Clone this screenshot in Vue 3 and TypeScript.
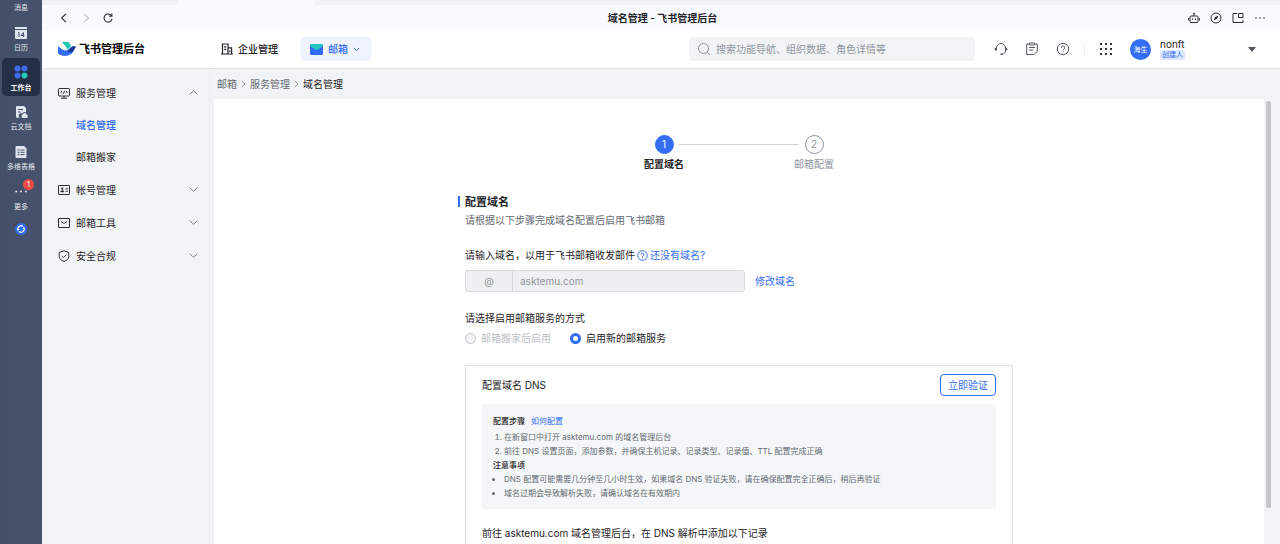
<script setup lang="ts">
import { ref } from 'vue'

interface NavGroup { label: string; icon: string; open: boolean; children: string[] }

const groups = ref<NavGroup[]>([
  { label: '服务管理', icon: 'service', open: true, children: ['域名管理', '邮箱搬家'] },
  { label: '帐号管理', icon: 'account', open: false, children: [] },
  { label: '邮箱工具', icon: 'mail', open: false, children: [] },
  { label: '安全合规', icon: 'shield', open: false, children: [] },
])
const current = ref('域名管理')
const mode = ref('new')
const keyword = ref('')
const domain = ref('asktemu.com')
</script>

<template>
  <div class="app">
    <nav class="rail" aria-label="应用">
      <button class="rail-item first">消息</button>
      <button class="rail-item second">
        <svg width="12" height="12" viewBox="0 0 12 12"><path d="M0 0h12v2H0zM0 3h12v8a1 1 0 0 1-1 1H1a1 1 0 0 1-1-1z" fill="#dfe4ee" /><path d="M3 6l1-.5V10M8.500 10V5.500L6 8.500h3.500" fill="none" stroke="#465270" /></svg>
        日历
      </button>
      <button class="rail-item active">
        <svg width="14" height="14" viewBox="0 0 14 14"><rect x=".5" y=".5" width="6" height="6" rx="2.500" fill="#3e6cf0" /><circle cx="10.500" cy="3.500" r="3" fill="#3e6cf0" /><circle cx="3.500" cy="10.500" r="3" fill="#3e6cf0" /><circle cx="10.500" cy="10.500" r="3" fill="#22c9b4" /></svg>
        工作台
      </button>
      <button class="rail-item">
        <svg width="13" height="12" viewBox="0 0 13 12"><path d="M2 0h7l2 2v4.500a3 3 0 0 0-4 1A2.300 2.300 0 0 0 5 11.800H2a1 1 0 0 1-1-1V1a1 1 0 0 1 1-1z" fill="#dfe4ee" /><path d="M3 3.500h5M3 6h2.500" stroke="#465270" /><path d="M7.500 12a2 2 0 0 1 0-3.500 2.200 2.200 0 0 1 4-.2A2 2 0 0 1 11.500 12z" fill="#dfe4ee" /></svg>
        云文档
      </button>
      <button class="rail-item">
        <svg width="12" height="12" viewBox="0 0 12 12"><path d="M1 0h8l2.500 2.500V11a1 1 0 0 1-1 1H1.500a1 1 0 0 1-1-1V1z" fill="#dfe4ee" /><path d="M2.500 4h2M5.500 4h4M2.500 6.300h2M5.500 6.300h4M2.500 8.600h2M5.500 8.600h4" stroke="#465270" /></svg>
        多维表格
      </button>
      <button class="rail-item">
        <svg width="12" height="12" viewBox="0 0 12 12"><g fill="#dfe4ee"><circle cx="1.200" cy="5.500" r="1" /><circle cx="6" cy="5.500" r="1" /><circle cx="10.800" cy="5.500" r="1" /></g></svg>
        更多
        <span class="badge">1</span>
      </button>
      <button class="sync" aria-label="同步">
        <svg width="12" height="12" viewBox="0 0 12 12"><circle cx="6" cy="6" r="6" fill="#2f6df0" /><path d="M3.200 7.200A3 3 0 0 1 8 3.700M8.800 4.800A3 3 0 0 1 4 8.300" fill="none" stroke="#fff" stroke-width="1.200" /><path d="M2 6h2.600L3.200 7.900zM10 6H7.400l1.400-1.900z" fill="#fff" /></svg>
      </button>
    </nav>

    <div class="window">
      <div class="tabs"><div class="tab"></div></div>
      <div class="toolbar">
        <div class="history">
          <button aria-label="后退"><svg width="10" height="10" viewBox="0 0 10 10" fill="none" stroke="#2b2f36" stroke-width="1.100"><path d="M7 .8L2.500 5 7 9.200" /></svg></button>
          <button aria-label="前进"><svg width="10" height="10" viewBox="0 0 10 10" fill="none" stroke="#bbbfc4" stroke-width="1.100"><path d="M3 .8L7.500 5 3 9.200" /></svg></button>
          <button aria-label="刷新"><svg width="10" height="10" viewBox="0 0 10 10" fill="none" stroke="#2b2f36" stroke-width="1.100"><path d="M8.500 3A4 4 0 1 0 9 5.800M8.900.6v2.700H6.200" /></svg></button>
        </div>
        <div class="title">域名管理 - 飞书管理后台</div>
        <div class="tools">
          <button aria-label="机器人"><svg width="12" height="12" viewBox="0 0 12 12" fill="none" stroke="#2b2f36"><rect x="2" y="4" width="8" height="6.500" rx="1" /><path d="M6 4V1.500M.6 6v2.500M11.400 6v2.500M4.500 6.500V8M7.500 6.500V8" /><circle cx="6" cy="1.500" r=".5" /></svg></button>
          <button aria-label="浏览器"><svg width="12" height="12" viewBox="0 0 12 12" fill="none" stroke="#2b2f36"><circle cx="6" cy="6" r="5" /><path d="M8.300 3.700L7 7 3.700 8.300 5 5z" fill="#2b2f36" stroke="none" /></svg></button>
          <button aria-label="小窗"><svg width="12" height="12" viewBox="0 0 12 12" fill="none" stroke="#2b2f36"><path d="M5 1.500H1v9h10V8" /><path d="M6.500 1.500H11v4H6.500z" /></svg></button>
          <button aria-label="更多"><svg width="12" height="12" viewBox="0 0 12 12" fill="#2b2f36"><circle cx="2" cy="6" r=".8" /><circle cx="6" cy="6" r=".8" /><circle cx="10" cy="6" r=".8" /></svg></button>
        </div>
      </div>

      <header class="header">
        <a class="brand" href="#">
          <svg width="18" height="14" viewBox="0 0 18 14"><path d="M3.500 0h6.800c1.500 1.300 2.300 3 2.600 4.600L9.500 7.500C8 4.500 6 2 3.500 0z" fill="#24c6b0" /><path d="M0 4c3 3.200 6.500 5 9.500 4.300 1.800-.4 3-3.300 5-3.900 1.200-.3 2.500-.1 3.500.4-1.500 1.400-1.900 4-3.600 6C11 14.700 4.500 14.800.6 12A1.300 1.300 0 0 1 0 11z" fill="#336df4" /><path d="M9 8.400c2-.4 3.500-3.400 5.500-4 1.200-.3 2.500-.1 3.500.4-1.500 1.400-1.900 4-3.600 5.200-1.500.9-3.600.3-5.400-1.600z" fill="#133c9a" /></svg>
          飞书管理后台
        </a>
        <a class="menu company" href="#">
          <svg width="12" height="12" viewBox="0 0 12 12" fill="none" stroke="#1f2329" stroke-width="1.200"><path d="M1.500 11V1H7v10M7 4.800h3.600V11M0 11h12M3.200 3.800h2M3.200 6.300h2M8.800 7.500v1.500" /></svg>
          企业管理
        </a>
        <button class="menu current">
          <svg width="13" height="11" viewBox="0 0 13 11"><rect width="13" height="11" rx="1.500" fill="#2f6bf2" /><path d="M1.500 0h10A1.500 1.500 0 0 1 13 1.500V2L8 5.500a2.500 2.500 0 0 1-3 0L0 2v-.5A1.500 1.500 0 0 1 1.500 0z" fill="#26c5c0" /></svg>
          邮箱
          <svg width="7" height="7" viewBox="0 0 7 7" fill="none" stroke="#336df4"><path d="M.8 2l2.700 2.700L6.200 2" /></svg>
        </button>
        <label class="search">
          <svg width="14" height="14" viewBox="0 0 14 14" fill="none" stroke="#8f959e"><circle cx="6.500" cy="6.500" r="5" /><path d="M10.200 10.200l2.600 2.600" /></svg>
          <input v-model="keyword" type="search" aria-label="搜索" placeholder="搜索功能导航、组织数据、角色详情等" />
        </label>
        <div class="actions">
          <button aria-label="客服"><svg width="14" height="14" viewBox="0 0 14 14" fill="none" stroke="#51565d"><path d="M2.500 8.500V6a4.500 4.500 0 0 1 9 0v2.500c0 2-1.500 3.500-3.500 3.500" /><path d="M1.500 6v2.500M12.500 6v2.500M6.500 12.300h2" stroke-width="1.500" /></svg></button>
          <button aria-label="任务"><svg width="14" height="14" viewBox="0 0 14 14" fill="none" stroke="#51565d"><path d="M4.500 2H1.700v10.500h7l3.600-3V2H9.500" /><path d="M4.500 1h5v2h-5zM4 5.500h6M4 8h4" /></svg></button>
          <button aria-label="帮助"><svg width="14" height="14" viewBox="0 0 14 14" fill="none" stroke="#51565d"><circle cx="7" cy="7" r="5.700" /><path d="M5.300 5.800a1.700 1.700 0 1 1 2.400 1.500c-.5.300-.7.500-.7 1.100M7 9.400v1" /></svg></button>
        </div>
        <button class="apps" aria-label="应用列表"><svg width="12" height="12" viewBox="0 0 12 12" fill="#2b2f36"><path d="M0 0h2v2H0zM5 0h2v2H5zM10 0h2v2h-2zM0 5h2v2H0zM5 5h2v2H5zM10 5h2v2h-2zM0 10h2v2H0zM5 10h2v2H5zM10 10h2v2h-2z" /></svg></button>
        <div class="avatar">海生</div>
        <div class="user"><span class="name">nonft</span><span class="role">创建人</span></div>
        <button class="caret" aria-label="帐号菜单"><svg width="8" height="5" viewBox="0 0 8 5"><path d="M0 0h8L4 5z" fill="#51565d" /></svg></button>
      </header>

      <div class="body">
        <aside class="side">
          <template v-for="g in groups" :key="g.label">
            <button class="group" :aria-expanded="g.open" @click="g.open = !g.open">
              <svg v-if="g.icon === 'service'" width="12" height="12" viewBox="0 0 12 12" fill="none" stroke="#2b2f36"><rect x=".5" y="1.500" width="11" height="7.500" rx=".8" /><path d="M6 9v2M3 11.200h6M4 4L2.800 5.200 4 6.400M8 4l1.200 1.200L8 6.400M6.500 3.800l-1 3" /></svg>
              <svg v-else-if="g.icon === 'account'" width="12" height="12" viewBox="0 0 12 12" fill="none" stroke="#2b2f36"><rect x=".5" y="1.500" width="11" height="9" rx=".5" /><path d="M7.500 4.800H10M7.500 7.200H10" /><circle cx="4.300" cy="4.700" r="1.100" fill="#2b2f36" stroke="none" /><path d="M2.300 8.200a2 2 0 0 1 4 0z" fill="#2b2f36" stroke="none" /></svg>
              <svg v-else-if="g.icon === 'mail'" width="12" height="12" viewBox="0 0 12 12" fill="none" stroke="#2b2f36"><rect x=".5" y="1.500" width="11" height="9" rx=".5" /><path d="M3 4.500l3 2 3-2" /></svg>
              <svg v-else width="12" height="12" viewBox="0 0 12 12" fill="none" stroke="#2b2f36"><path d="M6 .8l4.800 1.700v4C10.800 8.700 9 10.400 6 11.400 3 10.400 1.200 8.700 1.200 6.500v-4z" /><path d="M3.800 6l1.700 1.600 2.900-3" /></svg>
              <span>{{ g.label }}</span>
              <svg class="chevron" :class="{ up: g.open }" width="9" height="9" viewBox="0 0 9 9" fill="none" stroke="#7b8088"><path d="M.7 2.700l3.800 3.600 3.800-3.600" /></svg>
            </button>
            <template v-if="g.open">
              <a v-for="c in g.children" :key="c" href="#" class="child" :class="{ on: c === current }" @click.prevent="current = c">{{ c }}</a>
            </template>
          </template>
        </aside>

        <main class="main">
          <nav class="crumbs" aria-label="面包屑">
            <a href="#">邮箱</a>
            <svg width="5" height="8" viewBox="0 0 5 8" fill="none" stroke="#8f959e"><path d="M.8 1L4 4 .8 7" /></svg>
            <a href="#">服务管理</a>
            <svg width="5" height="8" viewBox="0 0 5 8" fill="none" stroke="#8f959e"><path d="M.8 1L4 4 .8 7" /></svg>
            <span>域名管理</span>
          </nav>
          <div class="viewport">
            <div class="panel">
              <ol class="steps">
                <li class="step now"><span class="num">1</span>配置域名</li>
                <li class="line" aria-hidden="true"></li>
                <li class="step"><span class="num">2</span>邮箱配置</li>
              </ol>
              <form class="form" @submit.prevent>
                <h1>配置域名</h1>
                <p class="intro">请根据以下步骤完成域名配置后启用飞书邮箱</p>

                <div class="label-row">
                  <label for="domain">请输入域名，以用于飞书邮箱收发邮件</label>
                  <a href="#">
                    <svg width="11" height="11" viewBox="0 0 11 11" fill="none" stroke="#336df4"><circle cx="5.500" cy="5.500" r="4.800" /><path d="M4.100 4.500a1.400 1.400 0 1 1 2 1.300c-.4.200-.6.400-.6.900M5.500 7.500v1" /></svg>
                    还没有域名?
                  </a>
                </div>
                <div class="domain-row">
                  <div class="domain">
                    <span class="at">@</span>
                    <input id="domain" v-model="domain" type="text" disabled />
                  </div>
                  <a href="#">修改域名</a>
                </div>

                <fieldset>
                  <legend>请选择启用邮箱服务的方式</legend>
                  <label class="radio off"><input v-model="mode" type="radio" name="mode" value="move" disabled />邮箱搬家后启用</label>
                  <label class="radio"><input v-model="mode" type="radio" name="mode" value="new" />启用新的邮箱服务</label>
                </fieldset>

                <section class="card">
                  <div class="card-head">
                    <h2>配置域名 DNS</h2>
                    <button type="button" class="verify">立即验证</button>
                  </div>
                  <div class="tips">
                    <h3>配置步骤<a href="#">如何配置</a></h3>
                    <ol>
                      <li>在新窗口中打开 asktemu.com 的域名管理后台</li>
                      <li>前往 DNS 设置页面，添加参数，并确保主机记录、记录类型、记录值、TTL 配置完成正确</li>
                    </ol>
                    <h3>注意事项</h3>
                    <ul>
                      <li>DNS 配置可能需要几分钟至几小时生效，如果域名 DNS 验证失败，请在确保配置完全正确后，稍后再验证</li>
                      <li>域名过期会导致解析失败，请确认域名在有效期内</li>
                    </ul>
                  </div>
                  <p class="next">前往 asktemu.com 域名管理后台，在 DNS 解析中添加以下记录</p>
                </section>
              </form>
            </div>
            <div class="scrollbar"><div class="thumb"></div></div>
          </div>
        </main>
      </div>
    </div>
  </div>
</template>

<style>
body { margin: 0; }
</style>

<style scoped>
* { box-sizing: border-box; }
.app { display: flex; height: 100vh; overflow: hidden; background: #f2f3f5; color: #1f2329; font: 10px/16px Inter, "Noto Sans CJK SC", sans-serif; }
button { border: 0; padding: 0; margin: 0; background: none; font: inherit; color: inherit; display: flex; align-items: center; cursor: pointer; }
a { color: #336df4; text-decoration: none; }
h1, h2, h3, p, ol, ul { margin: 0; padding: 0; font-size: inherit; font-weight: 400; }
svg { flex: none; display: block; }

.rail { flex: none; width: 42px; background: linear-gradient(90deg, #434f68, #49526d); display: flex; flex-direction: column; align-items: center; overflow: hidden; }
.rail-item { position: relative; flex: none; width: 38px; height: 38px; margin-bottom: 2px; padding-top: 4px; border-radius: 5px; flex-direction: column; justify-content: center; gap: 4px; font-size: 7px; line-height: 10px; color: #e4e8f0; white-space: nowrap; }
.rail-item.first { height: 16px; margin-bottom: 4px; padding-top: 0; }
.rail-item.second { height: 36px; }
.rail-item.active { background: #262f45; color: #fff; font-weight: 700; }
.badge { position: absolute; top: 1px; right: 6px; width: 11px; height: 11px; border-radius: 6px; background: #ec4b48; color: #fff; line-height: 11px; text-align: center; }
.sync { margin-top: 5px; }

.window { flex: 1; min-width: 0; display: flex; flex-direction: column; }
.tabs { flex: none; height: 5px; background: #f0f1f3; padding-left: 136px; }
.tab { width: 137px; height: 5px; background: #f8fafd; }
.toolbar { flex: none; height: 25px; background: #f8fafd; display: grid; grid-template-columns: 1fr auto 1fr; align-items: center; padding: 0 14px 0 17px; }
.history { display: flex; gap: 12px; }
.title { font-weight: 600; }
.tools { display: flex; justify-content: flex-end; gap: 10px; }

.header { flex: none; height: 39px; background: #fff; border-bottom: 1px solid #e2e4e8; display: flex; align-items: center; padding: 0 24px 0 16px; }
.brand { display: flex; align-items: center; gap: 3px; color: #000; font-size: 11px; font-weight: 700; width: 154px; }
.menu { display: flex; align-items: center; gap: 5px; height: 24px; color: #1f2329; padding: 0 9px; font-weight: 500; }
.company { width: 80px; margin-right: 9px; white-space: nowrap; }
.current { width: 70px; background: #eff3fe; border-radius: 3px; color: #336df4; }
.search { width: 286px; height: 24px; margin-left: auto; background: #f2f3f5; border-radius: 4px; display: flex; align-items: center; gap: 5px; padding: 0 8px; }
.search input { flex: 1; min-width: 0; border: 0; outline: 0; background: none; font: inherit; padding: 0; }
.search input::placeholder { color: #8f959e; opacity: 1; }
.actions { display: flex; gap: 17px; padding: 0 14px 0 19px; border-right: 1px solid #eceef0; }
.apps { margin: 0 18px 0 15px; }
.avatar { width: 21px; height: 21px; border-radius: 50%; background: #336df4; color: #fff; font-size: 7px; line-height: 21px; text-align: center; }
.user { display: flex; flex-direction: column; align-items: flex-start; width: 97px; padding-left: 9px; }
.name { line-height: 12px; }
.role { background: #dbe6ff; color: #336df4; border-radius: 2px; padding: 0 2px; font-size: 7px; line-height: 10px; }

.body { flex: 1; min-height: 0; display: flex; }
.side { flex: none; width: 168px; padding: 7px 11px 0 16px; border-right: 1px solid #eceef0; }
.group { width: 100%; height: 33px; gap: 6px; }
.chevron { margin-left: auto; }
.up { transform: rotate(180deg); }
.child { display: block; padding-left: 18px; line-height: 32px; color: #1f2329; }
.child.on { color: #336df4; font-weight: 500; }

.main { flex: 1; min-width: 0; display: flex; flex-direction: column; padding-left: 4px; }
.crumbs { flex: none; display: flex; align-items: center; gap: 4px; height: 30px; padding-left: 3px; }
.crumbs a { color: #646a73; }
.viewport { flex: 1; min-height: 0; display: flex; }
.panel { flex: 1; min-width: 0; background: #fff; overflow: hidden; padding-top: 36px; }
.scrollbar { flex: none; width: 16px; padding: 2px 9px 36px 2px; }
.thumb { height: 100%; border-radius: 3px; background: #c3c5c8; }

.steps { display: flex; justify-content: center; list-style: none; }
.step { width: 40px; display: flex; flex-direction: column; align-items: center; gap: 2px; color: #8f959e; white-space: nowrap; }
.num { width: 19px; height: 19px; border: 1px solid #8f959e; border-radius: 50%; line-height: 17px; text-align: center; }
.now { color: #1f2329; font-weight: 600; }
.now .num { background: #336df4; border-color: #336df4; color: #fff; font-weight: 400; }
.line { width: 120px; height: 1px; margin: 9px -5px 0; background: #cfd2d6; }

.form { max-width: 548px; margin: 22px auto 0; }
h1 { font-size: 11px; line-height: 16px; font-weight: 600; position: relative; }
h1::before { content: ""; position: absolute; left: -7px; top: 2px; width: 2px; height: 11px; background: #336df4; }
.intro { margin-top: 2px; color: #646a73; }
.label-row { display: flex; gap: 2px; margin-top: 19px; }
.label-row a { display: flex; align-items: center; gap: 2px; }
.domain-row { display: flex; align-items: center; gap: 10px; margin-top: 7px; }
.domain { width: 280px; height: 22px; border: 1px solid #d5d8dc; border-radius: 3px; background: #eff0f1; display: flex; overflow: hidden; color: #8f959e; }
.at { width: 47px; border-right: 1px solid #d5d8dc; text-align: center; line-height: 20px; }
.domain input { flex: 1; min-width: 0; border: 0; padding: 0 7px; background: none; font: inherit; color: #8f959e; }
fieldset { border: 0; margin: 18px 0 0; padding: 0; display: flex; gap: 19px; }
legend { padding: 0; margin-bottom: 4px; }
.radio { display: flex; align-items: center; gap: 5px; }
.radio input { appearance: none; width: 11px; height: 11px; margin: 0; border: 1px solid #c4c8cd; border-radius: 50%; background: #f2f3f5; }
.radio input:checked { border: 3px solid #336df4; background: #fff; }
.off { color: #bbbfc4; }

.card { margin-top: 19px; border: 1px solid #dee0e3; padding: 8px 16px 24px; }
.card-head { display: flex; justify-content: space-between; align-items: center; }
.verify { height: 22px; padding: 0 7px; border: 1px solid #336df4; border-radius: 4px; color: #336df4; }
.tips { margin-top: 8px; padding: 10px 11px 9px; background: #f5f6f7; border-radius: 3px; font-size: 8px; line-height: 14px; color: #646a73; }
.tips h3 { color: #1f2329; font-weight: 500; }
.tips h3 a { margin-left: 6px; font-weight: 400; }
.tips ol, .tips ul { padding-left: 11px; }
.tips ol { margin-top: 2px; }
.next { margin-top: 16px; }
</style>
